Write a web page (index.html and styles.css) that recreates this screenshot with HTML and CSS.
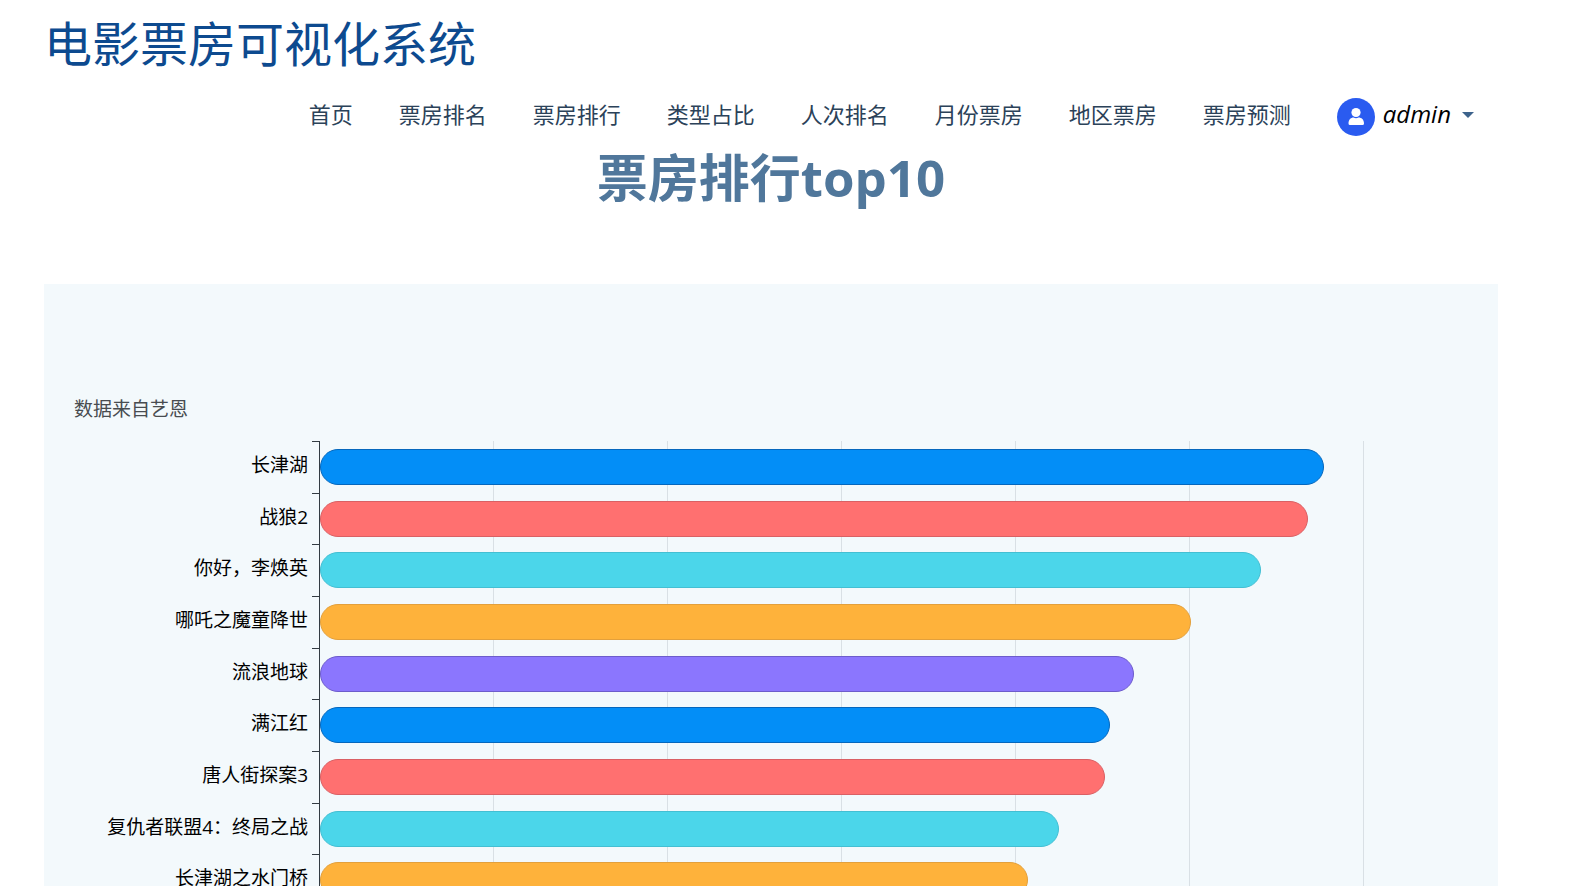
FILE: index.html
```html
<!DOCTYPE html>
<html lang="zh-CN">
<head>
    <meta charset="UTF-8">
    <meta name="viewport" content="width=device-width, initial-scale=1.0">
    <title>电影票房可视化系统</title>
    <link rel="stylesheet" href="styles.css">
</head>
<body>
    <header>
        <h1 class="site-title">电影票房可视化系统</h1>
        <nav class="navbar">
            <a href="#">首页</a>
            <a href="#">票房排名</a>
            <a href="#">票房排行</a>
            <a href="#">类型占比</a>
            <a href="#">人次排名</a>
            <a href="#">月份票房</a>
            <a href="#">地区票房</a>
            <a href="#">票房预测</a>
            <button class="user" type="button">
                <svg class="avatar" viewBox="0 0 38 38">
                    <circle cx="19" cy="19" r="19" fill="#2a5bf0"/>
                    <circle cx="19" cy="14.500" r="4.600" fill="#fff"/>
                    <path d="M11.500 25.500C11.500 21.500 14 19.500 16.500 19.500Q19 21 21.500 19.500C24.500 19.500 27 21.500 27 25.500Q27 27 25.500 27H13Q11.500 27 11.500 25.500Z" fill="#fff"/>
                </svg>
                <span class="user-name">admin</span>
                <span class="caret"></span>
            </button>
        </nav>
    </header>

    <main>
        <h2 class="page-title">票房排行top10</h2>
        <section class="panel">
            <p class="source">数据来自艺恩</p>
            <div class="chart">
                <div class="labels">
                    <span>长津湖</span>
                    <span>战狼2</span>
                    <span>你好，李焕英</span>
                    <span>哪吒之魔童降世</span>
                    <span>流浪地球</span>
                    <span>满江红</span>
                    <span>唐人街探案3</span>
                    <span>复仇者联盟4：终局之战</span>
                    <span>长津湖之水门桥</span>
                </div>
                <div class="ticks">
                    <i></i><i></i><i></i><i></i><i></i><i></i><i></i><i></i><i></i>
                </div>
                <div class="plot">
                    <div class="grid-lines"><i></i><i></i><i></i><i></i><i></i><i></i></div>
                    <div class="bars">
                        <div class="row"><div class="bar blue" style="width: 96.2%"></div></div>
                        <div class="row"><div class="bar red" style="width: 94.6%"></div></div>
                        <div class="row"><div class="bar cyan" style="width: 90.1%"></div></div>
                        <div class="row"><div class="bar orange" style="width: 83.4%"></div></div>
                        <div class="row"><div class="bar purple" style="width: 78%"></div></div>
                        <div class="row"><div class="bar blue" style="width: 75.7%"></div></div>
                        <div class="row"><div class="bar red" style="width: 75.2%"></div></div>
                        <div class="row"><div class="bar cyan" style="width: 70.8%"></div></div>
                        <div class="row"><div class="bar orange" style="width: 67.8%"></div></div>
                    </div>
                </div>
            </div>
        </section>
    </main>
</body>
</html>
```

FILE: styles.css
```css
body {
    margin: 0;
    padding: 12px 88px 0 44px;
    height: 100vh;
    box-sizing: border-box;
    overflow: hidden;
    background: #fff;
    font-family: "Open Sans", "Noto Sans CJK SC", sans-serif;
}
.site-title {
    margin: 0;
    font-size: 48px;
    line-height: 64px;
    font-weight: 400;
    color: #0d4a8f;
}
.navbar {
    display: flex;
    justify-content: flex-end;
    align-items: flex-start;
    gap: 46px;
    margin-top: 22px;
    padding-right: 24px;
}
.navbar a {
    font-size: 22px;
    line-height: 32px;
    font-weight: 400;
    color: #2b4259;
    text-decoration: none;
}
.user {
    display: flex;
    align-items: flex-start;
    padding: 0;
    border: 0;
    background: none;
    font-family: inherit;
    cursor: pointer;
}
.avatar {
    width: 38px;
    height: 38px;
}
.user-name {
    margin: 0 11px 0 8px;
    font-size: 24px;
    line-height: 32px;
    font-style: italic;
    color: #000;
}
.caret {
    margin-top: 14px;
    border: 6px solid transparent;
    border-top-color: #3d638c;
    border-bottom: 0;
}
.page-title {
    margin: 8px 0 0;
    font-size: 51px;
    line-height: 66px;
    font-weight: 700;
    text-align: center;
    color: #50779b;
}
.panel {
    box-sizing: border-box;
    margin-top: 74px;
    padding: 110px 134px 0 30px;
    background: #f3f9fc;
}
.source {
    margin: 0;
    font-size: 19px;
    line-height: 30px;
    color: #484c50;
}
.chart {
    display: flex;
    height: 465px;
    margin-top: 17px;
}
.labels {
    display: flex;
    flex-direction: column;
    width: 234px;
    padding-right: 4px;
    text-align: right;
    font-size: 19px;
    line-height: 48px;
    color: #000;
}
.labels span {
    flex: 1;
}
.ticks {
    display: flex;
    flex-direction: column;
    width: 7px;
    border-right: 1px solid #333b42;
}
.ticks i {
    flex: 1;
    border-top: 1px solid #333b42;
}
.plot {
    flex: 1;
    display: grid;
}
.grid-lines,
.bars {
    grid-area: 1 / 1;
    display: flex;
}
.grid-lines i {
    flex: 1;
    border-right: 1px solid #d9e0e5;
}
.bars {
    flex-direction: column;
}
.row {
    flex: 1;
    display: flex;
    align-items: center;
}
.bar {
    box-sizing: border-box;
    height: 36px;
    border: 1px solid;
    border-radius: 18px;
}
.blue {
    background: #038ef7;
    border-color: #0567bd;
}
.red {
    background: #ff7070;
    border-color: #da6064;
}
.cyan {
    background: #4bd6ea;
    border-color: #43bfd3;
}
.orange {
    background: #feb23b;
    border-color: #e3a03c;
}
.purple {
    background: #8b76fe;
    border-color: #6d5ccb;
}
```
